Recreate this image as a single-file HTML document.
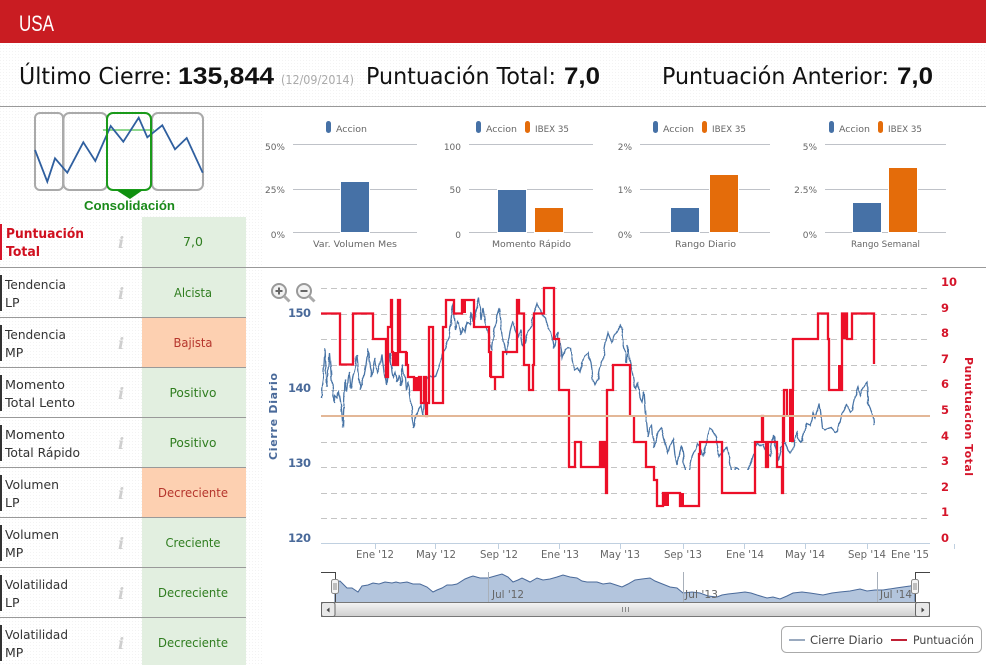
<!DOCTYPE html>
<html lang="es"><head><meta charset="utf-8"><title>USA</title>
<style>
html,body{margin:0;padding:0;background:#fff;width:986px;height:665px;overflow:hidden}
svg{display:block}
text{font-family:"DejaVu Sans","Liberation Sans",sans-serif}
.h{font-size:23px;fill:#111}
.hb{font-size:24px;font-weight:bold;fill:#111;font-family:"Liberation Sans",sans-serif}
.r{font-size:12.5px;fill:#333}
.v{font-size:12.5px;text-anchor:middle}
.g{fill:#2f7d1f}.o{fill:#b5352c}
.i{font-family:"DejaVu Serif","Liberation Serif",serif;font-style:italic;font-weight:bold;font-size:16px;fill:#cfcfcf;text-anchor:middle}
.s{font-size:9px;fill:#666}
.e{text-anchor:end}
.ax{font-size:10.5px;fill:#666;text-anchor:middle}
.yl{font-size:11.5px;font-weight:bold;fill:#4a6a9a;text-anchor:end}
.yr{font-size:11.5px;font-weight:bold;fill:#d5152a}
</style></head><body>
<svg width="986" height="665" viewBox="0 0 986 665" xmlns="http://www.w3.org/2000/svg">
<defs>
<pattern id="d" width="3" height="3" patternUnits="userSpaceOnUse"><rect width="3" height="3" fill="#fff"/><rect width="1" height="1" fill="#f3f3f3"/></pattern>
<linearGradient id="sb" x1="0" y1="0" x2="0" y2="1"><stop offset="0" stop-color="#f4f4f4"/><stop offset="1" stop-color="#cfcfcf"/></linearGradient>
<filter id="jit" filterUnits="userSpaceOnUse" x="300" y="270" width="620" height="200"><feTurbulence type="fractalNoise" baseFrequency="0.12" numOctaves="1" seed="4"/><feDisplacementMap in="SourceGraphic" scale="4" xChannelSelector="G" yChannelSelector="R"/></filter>
</defs>
<rect width="986" height="665" fill="#fff"/>
<rect y="43" width="986" height="63" fill="url(#d)"/>
<rect y="107" width="262" height="558" fill="url(#d)"/>
<rect width="986" height="43" fill="#c91c22"/>
<text x="19" y="31" style="font-family:'Liberation Sans',sans-serif" font-size="22" fill="#fff" textLength="35" lengthAdjust="spacingAndGlyphs">USA</text>

<text class="h" x="19" y="84" textLength="153" lengthAdjust="spacingAndGlyphs">Último Cierre:</text>
<text class="hb" x="178" y="84" textLength="96" lengthAdjust="spacingAndGlyphs">135,844</text>
<text x="281" y="84" font-size="12" fill="#aaa" textLength="73" lengthAdjust="spacingAndGlyphs">(12/09/2014)</text>
<text class="h" x="366" y="84" textLength="190" lengthAdjust="spacingAndGlyphs">Puntuación Total:</text>
<text class="hb" x="564" y="84" textLength="36" lengthAdjust="spacingAndGlyphs">7,0</text>
<text class="h" x="662" y="84" textLength="227" lengthAdjust="spacingAndGlyphs">Puntuación Anterior:</text>
<text class="hb" x="897" y="84" textLength="36" lengthAdjust="spacingAndGlyphs">7,0</text>
<rect y="106" width="986" height="1" fill="#999"/>
<rect y="267" width="986" height="1" fill="#999"/>

<!-- logo -->
<g fill="none" stroke="#aaa" stroke-width="2">
<rect x="35" y="113" width="28" height="77" rx="5"/>
<rect x="63.500" y="113" width="43.500" height="77" rx="6"/>
<rect x="152" y="113" width="51" height="77" rx="6"/>
</g>
<path d="M103 130H154" stroke="#8fd88f" stroke-width="2"/>
<path d="M35 150L47.300 181.700L55 158.300L67.300 172.700L83.300 142.300L95.300 161L110.700 126L123.300 141.700L138.700 117.700L147.300 137.300L162.300 125.300L175 149.300L186.700 138L202.700 172.700" fill="none" stroke="#2f5f9f" stroke-width="1.800"/>
<rect x="107" y="113" width="44" height="77" rx="6" fill="none" stroke="#1a9a1a" stroke-width="2"/>
<path d="M116 190H143L130 199Z" fill="#109010"/>
<text x="84" y="210" style="font-family:'Liberation Sans',sans-serif" font-size="12.500" font-weight="bold" fill="#1a8a1a" textLength="91" lengthAdjust="spacingAndGlyphs">Consolidación</text>

<!-- table -->
<rect x="142" y="217" width="104" height="50" fill="#e2efe0"/>
<rect x="142" y="268" width="104" height="49" fill="#e2efe0"/>
<rect x="142" y="318" width="104" height="49" fill="#fdd0b1"/>
<rect x="142" y="368" width="104" height="49" fill="#e2efe0"/>
<rect x="142" y="418" width="104" height="49" fill="#e2efe0"/>
<rect x="142" y="468" width="104" height="49" fill="#fdd0b1"/>
<rect x="142" y="518" width="104" height="49" fill="#e2efe0"/>
<rect x="142" y="568" width="104" height="49" fill="#e2efe0"/>
<rect x="142" y="618" width="104" height="47" fill="#e2efe0"/>
<g fill="#999"><rect y="317" width="246" height="1"/><rect y="367" width="246" height="1"/><rect y="417" width="246" height="1"/><rect y="467" width="246" height="1"/><rect y="517" width="246" height="1"/><rect y="567" width="246" height="1"/><rect y="617" width="246" height="1"/></g>
<rect y="224" width="2" height="36" fill="#d5152a"/>
<g fill="#333"><rect y="275" width="2" height="36"/><rect y="325" width="2" height="36"/><rect y="375" width="2" height="36"/><rect y="425" width="2" height="36"/><rect y="475" width="2" height="36"/><rect y="525" width="2" height="36"/><rect y="575" width="2" height="36"/><rect y="625" width="2" height="36"/></g>

<text x="6" y="238" font-size="13" font-weight="bold" fill="#d0101f" textLength="78" lengthAdjust="spacingAndGlyphs">Puntuación</text>
<text x="6" y="256" font-size="13" font-weight="bold" fill="#d0101f" textLength="34" lengthAdjust="spacingAndGlyphs">Total</text>
<text class="r" x="5" y="289" textLength="61" lengthAdjust="spacingAndGlyphs">Tendencia</text><text class="r" x="5" y="307">LP</text>
<text class="r" x="5" y="339" textLength="61" lengthAdjust="spacingAndGlyphs">Tendencia</text><text class="r" x="5" y="357">MP</text>
<text class="r" x="5" y="389" textLength="60" lengthAdjust="spacingAndGlyphs">Momento</text><text class="r" x="5" y="407" textLength="70" lengthAdjust="spacingAndGlyphs">Total Lento</text>
<text class="r" x="5" y="439" textLength="60" lengthAdjust="spacingAndGlyphs">Momento</text><text class="r" x="5" y="457" textLength="75" lengthAdjust="spacingAndGlyphs">Total Rápido</text>
<text class="r" x="5" y="489" textLength="54" lengthAdjust="spacingAndGlyphs">Volumen</text><text class="r" x="5" y="507">LP</text>
<text class="r" x="5" y="539" textLength="54" lengthAdjust="spacingAndGlyphs">Volumen</text><text class="r" x="5" y="557">MP</text>
<text class="r" x="5" y="589" textLength="63" lengthAdjust="spacingAndGlyphs">Volatilidad</text><text class="r" x="5" y="607">LP</text>
<text class="r" x="5" y="639" textLength="63" lengthAdjust="spacingAndGlyphs">Volatilidad</text><text class="r" x="5" y="657">MP</text>

<text class="i" x="121" y="248">i</text><text class="i" x="121" y="299">i</text><text class="i" x="121" y="349">i</text><text class="i" x="121" y="399">i</text><text class="i" x="121" y="449">i</text><text class="i" x="121" y="499">i</text><text class="i" x="121" y="549">i</text><text class="i" x="121" y="599">i</text><text class="i" x="121" y="649">i</text>

<text class="v g" x="193" y="246">7,0</text>
<text class="v g" x="193" y="297" textLength="38" lengthAdjust="spacingAndGlyphs">Alcista</text>
<text class="v o" x="193" y="347" textLength="39" lengthAdjust="spacingAndGlyphs">Bajista</text>
<text class="v g" x="193" y="397" textLength="47" lengthAdjust="spacingAndGlyphs">Positivo</text>
<text class="v g" x="193" y="447" textLength="47" lengthAdjust="spacingAndGlyphs">Positivo</text>
<text class="v o" x="193" y="497" textLength="70" lengthAdjust="spacingAndGlyphs">Decreciente</text>
<text class="v g" x="193" y="547" textLength="55" lengthAdjust="spacingAndGlyphs">Creciente</text>
<text class="v g" x="193" y="597" textLength="70" lengthAdjust="spacingAndGlyphs">Decreciente</text>
<text class="v g" x="193" y="647" textLength="70" lengthAdjust="spacingAndGlyphs">Decreciente</text>

<!-- bar charts -->
<path d="M293 144.500H417M293 189.500H417M293 232.500H417M469 144.500H593M469 189.500H593M469 232.500H593M640 144.500H770M640 189.500H770M640 232.500H770M825 144.500H946M825 189.500H946M825 232.500H946" stroke="#bfc2c8" fill="none"/>
<g stroke="#fff" stroke-width="1">
<rect x="340.500" y="181.500" width="29" height="51" fill="#4671a6"/>
<rect x="497.500" y="189.500" width="29" height="43" fill="#4671a6"/>
<rect x="534.500" y="207.500" width="29" height="25" fill="#e46c0a"/>
<rect x="670.500" y="207.500" width="29" height="25" fill="#4671a6"/>
<rect x="709.500" y="174.500" width="29" height="58" fill="#e46c0a"/>
<rect x="852.500" y="202.500" width="29" height="30" fill="#4671a6"/>
<rect x="888.500" y="167.500" width="29" height="65" fill="#e46c0a"/>
</g>
<g>
<rect x="326" y="121" width="5" height="12" rx="2.500" fill="#4671a6"/><text class="s" x="336" y="132" textLength="31" lengthAdjust="spacingAndGlyphs">Accion</text>
<rect x="476" y="121" width="5" height="12" rx="2.500" fill="#4671a6"/><text class="s" x="486" y="132" textLength="31" lengthAdjust="spacingAndGlyphs">Accion</text>
<rect x="525" y="121" width="5" height="12" rx="2.500" fill="#e46c0a"/><text class="s" x="535" y="132" textLength="34" lengthAdjust="spacingAndGlyphs">IBEX 35</text>
<rect x="653" y="121" width="5" height="12" rx="2.500" fill="#4671a6"/><text class="s" x="663" y="132" textLength="31" lengthAdjust="spacingAndGlyphs">Accion</text>
<rect x="702" y="121" width="5" height="12" rx="2.500" fill="#e46c0a"/><text class="s" x="712" y="132" textLength="34" lengthAdjust="spacingAndGlyphs">IBEX 35</text>
<rect x="829" y="121" width="5" height="12" rx="2.500" fill="#4671a6"/><text class="s" x="839" y="132" textLength="31" lengthAdjust="spacingAndGlyphs">Accion</text>
<rect x="878" y="121" width="5" height="12" rx="2.500" fill="#e46c0a"/><text class="s" x="888" y="132" textLength="34" lengthAdjust="spacingAndGlyphs">IBEX 35</text>

<text class="s e" x="285" y="150">50%</text><text class="s e" x="285" y="193">25%</text><text class="s e" x="285" y="238">0%</text>
<text class="s e" x="461" y="150">100</text><text class="s e" x="461" y="193">50</text><text class="s e" x="461" y="238">0</text>
<text class="s e" x="632" y="150">2%</text><text class="s e" x="632" y="193">1%</text><text class="s e" x="632" y="238">0%</text>
<text class="s e" x="817" y="150">5%</text><text class="s e" x="817" y="193">2.5%</text><text class="s e" x="817" y="238">0%</text>

<text class="s" x="313" y="247" textLength="84" lengthAdjust="spacingAndGlyphs">Var. Volumen Mes</text>
<text class="s" x="492" y="247" textLength="79" lengthAdjust="spacingAndGlyphs">Momento Rápido</text>
<text class="s" x="675" y="247" textLength="61" lengthAdjust="spacingAndGlyphs">Rango Diario</text>
<text class="s" x="851" y="247" textLength="69" lengthAdjust="spacingAndGlyphs">Rango Semanal</text>
</g>

<!-- main chart -->
<path d="M321 288.500H927M321 314.500H927M321 339.500H927M321 365.500H927M321 390.500H927M321 442.500H927M321 467.500H927M321 493.500H927M321 518.500H927" stroke="#c4c4c4" stroke-dasharray="6 4" fill="none"/>
<path d="M321 543.500H930" stroke="#c0d0e0"/>
<path d="M375.500 544V549M435.500 544V549M498.500 544V549M559.500 544V549M620.500 544V549M683.500 544V549M744.500 544V549M805.500 544V549M867.500 544V549M954.500 544V549" stroke="#c0d0e0"/>

<path filter="url(#jit)" d="M321 398L322 386L323 380L325 348L327 387L328 376L330 353L332 378L334 403L335 395L337 397L339 392L341 404L343 427L345 380L347 392L349 372L351 388L353 376L355 368L357 355L359 378L360 390L362 382L364 377L366 365L368 349L370 368L372 377L374 362L375 358L377 372L379 368L381 360L382 355L384 372L386 385L388 365L390 353L392 372L393 377L395 372L397 382L399 375L401 386L403 365L405 378L406 390L408 382L409 387L411 402L412 417L414 428L416 415L418 412L419 408L421 405L423 417L425 395L427 380L430 375L433 378L435 377L438 368L440 362L442 357L445 348L447 342L449 338L451 320L453 303L454 318L455 330L457 322L459 324L461 335L463 328L465 332L467 322L470 325L472 313L474 325L476 310L479 298L481 320L483 308L485 322L488 332L490 345L492 350L494 332L496 318L499 308L501 322L503 340L506 355L508 342L510 332L513 320L515 330L518 337L520 330L522 345L525 343L527 335L530 328L532 325L534 312L537 303L539 308L542 315L545 318L548 328L551 332L554 348L556 338L558 332L560 345L562 358L565 350L568 347L570 348L572 362L575 370L578 368L580 372L582 366L585 355L588 352L591 362L593 378L595 385L598 378L600 368L603 360L605 345L608 333L610 338L612 342L615 335L618 330L621 325L623 342L625 352L627 363L628 345L630 362L632 370L634 383L636 388L638 382L640 398L642 402L644 392L646 415L648 437L650 428L652 425L654 448L656 440L658 432L661 428L663 435L665 442L668 453L670 445L673 438L675 455L677 465L680 452L682 445L684 462L686 478L689 470L692 457L695 450L697 443L700 446L703 455L705 452L708 435L710 428L713 430L716 438L718 450L720 457L724 450L727 448L730 465L732 475L735 468L738 470L741 475L744 481L747 472L750 465L752 460L755 450L757 443L760 446L763 445L766 452L770 457L772 445L773 435L775 442L778 460L781 448L785 443L788 450L791 453L794 445L797 433L800 442L802 440L805 428L807 423L810 426L812 420L813 413L815 418L817 412L819 404L821 420L822 428L825 430L828 428L831 427L835 432L838 431L840 420L842 413L845 408L847 405L850 412L852 410L855 396L858 387L860 395L862 390L865 385L867 382L868 403L871 410L873 415L874 425" fill="none" stroke="#4a74a6" stroke-width="1.300"/>

<path d="M321 313.500H340V364.500H353V313.500H373V339H386V377H388V327H391V300H392V352H393V365H398V300H400V352H406V365H408V377H414V390H419V377H421V403H424V377H426V416H427V403H429V327H433V403H443V327H446V300H454V313.500H462V300H474V327H489V352H491V377H495V390H495V377H503V352H517V300H519V313.500H524V365H529V390H533V365H534V313.500H544V288H554V339H559V390H569V467H575V442H581V467H600V442H602V467H604V442H606V493H607V390H613V365H630V416M634 416V442H646V467H654V480H657V506H663V493H680V506H699V454H700V442H722V493H755V442H762V416H763V442H766V467H768V442H777V467H782V493H783V416H784V442M784 416V390H787V416M789 390H793V339H818V313.500H828V339H829V390H842V313.500H847V339H852V313.500H874V364" fill="none" stroke="#ec0f28" stroke-width="2.300"/>
<g fill="#ec0f28">
<rect x="393" y="352" width="5" height="13"/><rect x="406" y="352" width="2" height="13"/><rect x="414" y="377" width="5" height="13"/><rect x="423" y="377" width="3" height="26"/><rect x="426" y="403" width="1" height="13"/><rect x="462" y="300" width="4" height="13"/><rect x="489" y="352" width="3" height="25"/><rect x="517" y="300" width="2" height="13"/><rect x="663" y="493" width="6" height="13"/><rect x="680" y="493" width="4" height="13"/><rect x="789" y="390" width="5" height="52"/><rect x="838" y="365" width="4" height="25"/><rect x="841" y="313" width="6" height="26"/>
</g>
<path d="M321 416H930" stroke="#e3b797" stroke-width="2"/>

<g fill="none" stroke="#999">
<circle cx="279" cy="291" r="7" stroke-width="2" fill="#f2f2f2"/><path d="M284 296L289.500 301.500" stroke-width="3" stroke="#aaa"/>
<circle cx="304" cy="291" r="7" stroke-width="2" fill="#f2f2f2"/><path d="M309 296L314.500 301.500" stroke-width="3" stroke="#aaa"/>
<path d="M275.500 291H282.500M279 287.500V294.500M300.500 291H307.500" stroke="#666" stroke-width="2"/>
</g>

<text class="yl" x="311" y="317" textLength="23">150</text><text class="yl" x="311" y="392" textLength="23">140</text><text class="yl" x="311" y="467" textLength="23">130</text><text class="yl" x="311" y="542" textLength="23">120</text>
<text transform="translate(277,460) rotate(-90)" font-size="11" font-weight="bold" fill="#4a6a9a" textLength="87">Cierre Diario</text>
<text class="yr" x="941" y="286">10</text><text class="yr" x="941" y="312">9</text><text class="yr" x="941" y="337">8</text><text class="yr" x="941" y="363">7</text><text class="yr" x="941" y="388">6</text><text class="yr" x="941" y="414">5</text><text class="yr" x="941" y="440">4</text><text class="yr" x="941" y="465">3</text><text class="yr" x="941" y="491">2</text><text class="yr" x="941" y="516">1</text><text class="yr" x="941" y="542">0</text>
<text transform="translate(965,357) rotate(90)" font-size="11" font-weight="bold" fill="#d5152a" textLength="119">Punutuacion Total</text>

<text class="ax" x="375" y="558" textLength="38" lengthAdjust="spacingAndGlyphs">Ene '12</text><text class="ax" x="436" y="558" textLength="40" lengthAdjust="spacingAndGlyphs">May '12</text><text class="ax" x="499" y="558" textLength="38" lengthAdjust="spacingAndGlyphs">Sep '12</text><text class="ax" x="560" y="558" textLength="38" lengthAdjust="spacingAndGlyphs">Ene '13</text><text class="ax" x="620" y="558" textLength="40" lengthAdjust="spacingAndGlyphs">May '13</text><text class="ax" x="683" y="558" textLength="38" lengthAdjust="spacingAndGlyphs">Sep '13</text><text class="ax" x="745" y="558" textLength="38" lengthAdjust="spacingAndGlyphs">Ene '14</text><text class="ax" x="805" y="558" textLength="40" lengthAdjust="spacingAndGlyphs">May '14</text><text class="ax" x="867" y="558" textLength="38" lengthAdjust="spacingAndGlyphs">Sep '14</text><text class="ax" x="910" y="558" textLength="38" lengthAdjust="spacingAndGlyphs">Ene '15</text>

<!-- navigator -->
<path d="M335 602V582L340 581L343 584L347 588L352 588L358 592L362 586L368 585L373 583L379 584L385 582L392 583L396 582L400 583L407 582L413 584L420 584L427 587L433 592L437 590L442 588L447 585L452 585L457 584L465 579L470 577L473 576L480 578L488 578L495 576L502 574L508 577L513 582L518 580L522 578L526 580L530 582L537 578L543 580L550 579L557 577L563 575L570 577L577 578L582 581L587 582L597 582L603 584L610 583L616 585L622 587L628 584L635 580L642 579L650 578L655 581L660 583L670 587L677 588L683 593L692 592L700 593L708 596L717 597L722 595L728 594L737 593L745 592L751 593L757 595L767 598L773 597L780 599L787 596L793 593L802 592L810 593L823 595L832 593L840 592L850 591L860 589L867 591L875 590L883 590L896 588L910 586L915 585V602Z" fill="#b3c5dd" stroke="#4a6a9a" stroke-width="1"/>
<rect x="335.500" y="601.500" width="580" height="1" fill="#b3c5dd"/>
<path d="M488.500 572V602M683.500 572V602M877.500 572V602" stroke="#a8b0ba"/>
<text x="492" y="598" font-size="10.500" fill="#666" textLength="32" lengthAdjust="spacingAndGlyphs">Jul '12</text>
<text x="685" y="598" font-size="10.500" fill="#666" textLength="33" lengthAdjust="spacingAndGlyphs">Jul '13</text>
<text x="880" y="598" font-size="10.500" fill="#666" textLength="32" lengthAdjust="spacingAndGlyphs">Jul '14</text>
<path d="M321 572.500H335.500V602M930 572.500H915.500V602" fill="none" stroke="#444"/>
<rect x="321.500" y="602.500" width="608" height="14" fill="url(#sb)" stroke="#777"/>
<rect x="321.500" y="602.500" width="13.500" height="14" rx="2" fill="#e8e8e8" stroke="#666"/>
<rect x="915.500" y="602.500" width="14" height="14" rx="2" fill="#e8e8e8" stroke="#666"/>
<path d="M329.500 607.500V612.500L326.500 610ZM921.500 607.500V612.500L924.500 610Z" fill="#444"/>
<path d="M622.500 607V612M625.500 607V612M628.500 607V612" stroke="#888"/>
<rect x="331.500" y="579.500" width="7" height="14" rx="2" fill="#f4f4f4" stroke="#888"/>
<rect x="911.500" y="579.500" width="7" height="14" rx="2" fill="#f4f4f4" stroke="#888"/>
<path d="M334 583V590M336 583V590M914 583V590M916 583V590" stroke="#888"/>

<!-- legend -->
<rect x="781.500" y="626.500" width="200" height="26" rx="5" fill="#fff" stroke="#aaa"/>
<path d="M789 640H805" stroke="#9aaabf" stroke-width="2"/>
<text x="810" y="644" font-size="11.500" fill="#444" textLength="73" lengthAdjust="spacingAndGlyphs">Cierre Diario</text>
<path d="M891 640H907" stroke="#c02035" stroke-width="2"/>
<text x="913" y="644" font-size="11.500" fill="#444" textLength="61" lengthAdjust="spacingAndGlyphs">Puntuación</text>
</svg>
</body></html>
